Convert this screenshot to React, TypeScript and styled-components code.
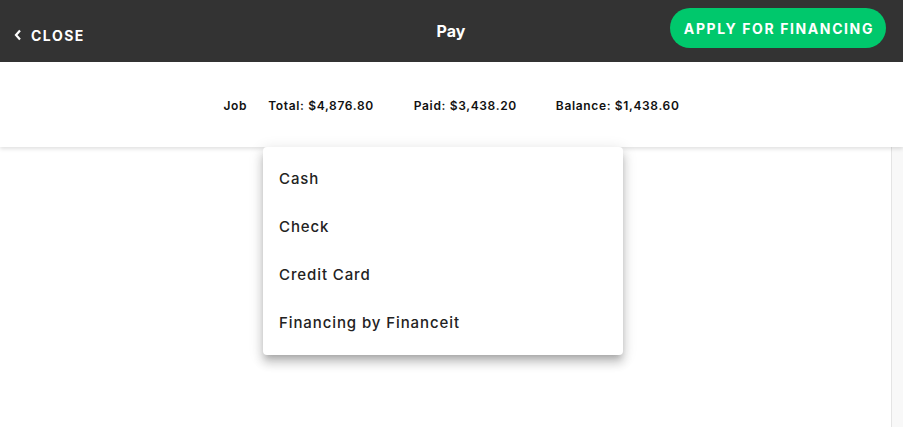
import React from "react"
import styled, { createGlobalStyle } from "styled-components"

const GlobalStyle = createGlobalStyle`
  html, body {
    margin: 0;
    padding: 0;
    height: 100%;
    background: #fff;
  }
  body {
    font-family: Inter, "Liberation Sans", sans-serif;
    color: #1d1d1d;
  }
  #root {
    height: 100%;
  }
`

const Page = styled.div`
  display: flex;
  flex-direction: column;
  height: 100vh;
  overflow: hidden;
`

const Header = styled.header`
  height: 62px;
  flex-shrink: 0;
  background: #333333;
  display: grid;
  grid-template-columns: 1fr auto 1fr;
  align-items: center;
  padding: 0 17px 0 14px;
  color: #fff;
`

const CloseButton = styled.button`
  justify-self: start;
  display: flex;
  align-items: center;
  gap: 9px;
  margin-top: 8px;
  padding: 0;
  background: none;
  border: none;
  color: #fff;
  font-family: inherit;
  font-size: 14px;
  font-weight: 700;
  letter-spacing: 1.5px;
  cursor: pointer;
`

const Title = styled.h1`
  margin: 0 0 0 2px;
  font-size: 16px;
  font-weight: 700;
`

const FinanceButton = styled.button`
  justify-self: end;
  height: 40px;
  margin-top: -6px;
  padding: 0 12px 0 14px;
  border: none;
  border-radius: 20px;
  background: #00c86c;
  color: #fff;
  font-family: inherit;
  font-size: 14px;
  font-weight: 700;
  letter-spacing: 1.6px;
  cursor: pointer;
`

const Summary = styled.div`
  height: 85px;
  box-sizing: border-box;
  flex-shrink: 0;
  display: flex;
  align-items: center;
  justify-content: center;
  padding: 1px 0 0 0;
  background: #fff;
  box-shadow: 0 2px 4px rgba(0, 0, 0, 0.12);
  position: relative;
  z-index: 1;
  font-size: 12px;
  font-weight: 600;
  letter-spacing: 0.65px;
  color: #111;
`

const SummaryItem = styled.span<{ $gap?: number }>`
  margin-left: ${(p) => p.$gap ?? 0}px;
`

const Body = styled.div`
  flex: 1;
  display: flex;
`

const Main = styled.main`
  flex: 1;
  position: relative;
`

const Gutter = styled.div`
  width: 11px;
  background: #f8f8f8;
  border-left: 1px solid #e4e4e4;
`

const Menu = styled.ul`
  position: absolute;
  top: 0;
  left: 263px;
  z-index: 2;
  width: 360px;
  margin: 0;
  padding: 8px 0;
  list-style: none;
  background: #fff;
  border-radius: 4px;
  box-shadow: 0 5px 6px -3px rgba(0, 0, 0, 0.2), 0 8px 10px 1px rgba(0, 0, 0, 0.14),
    0 3px 14px 2px rgba(0, 0, 0, 0.1);
`

const MenuItem = styled.li`
  height: 48px;
  box-sizing: border-box;
  display: flex;
  align-items: center;
  padding: 0 16px 2px;
  font-size: 15px;
  font-weight: 500;
  letter-spacing: 0.9px;
  color: #222;
  cursor: pointer;
`

const methods = ["Cash", "Check", "Credit Card", "Financing by Financeit"]

export default function App() {
  return (
    <Page>
      <GlobalStyle />
      <Header>
        <CloseButton>
          <svg width="8" height="12" viewBox="0 0 8 12">
            <path d="M6 1.5 L2 6 L6 10.5" fill="none" stroke="#fff" strokeWidth="2.2" />
          </svg>
          CLOSE
        </CloseButton>
        <Title>Pay</Title>
        <FinanceButton>APPLY FOR FINANCING</FinanceButton>
      </Header>
      <Summary>
        <SummaryItem>Job</SummaryItem>
        <SummaryItem $gap={21}>Total: $4,876.80</SummaryItem>
        <SummaryItem $gap={40}>Paid: $3,438.20</SummaryItem>
        <SummaryItem $gap={39}>Balance: $1,438.60</SummaryItem>
      </Summary>
      <Body>
        <Main>
          <Menu>
            {methods.map((m) => (
              <MenuItem key={m}>{m}</MenuItem>
            ))}
          </Menu>
        </Main>
        <Gutter />
      </Body>
    </Page>
  )
}
